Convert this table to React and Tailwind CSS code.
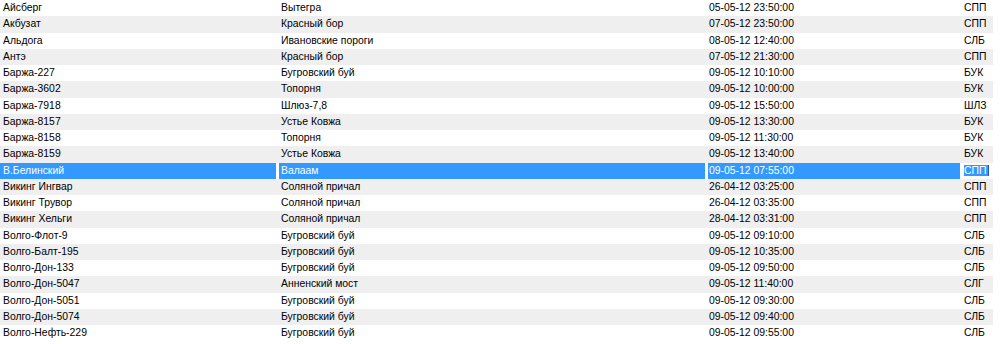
import React from 'react'

const rows = [
  ['Айсберг', 'Вытегра', '05-05-12 23:50:00', 'СПП'],
  ['Акбузат', 'Красный бор', '07-05-12 23:50:00', 'СПП'],
  ['Альдога', 'Ивановские пороги', '08-05-12 12:40:00', 'СЛБ'],
  ['Антэ', 'Красный бор', '07-05-12 21:30:00', 'СПП'],
  ['Баржа-227', 'Бугровский буй', '09-05-12 10:10:00', 'БУК'],
  ['Баржа-3602', 'Топорня', '09-05-12 10:00:00', 'БУК'],
  ['Баржа-7918', 'Шлюз-7,8', '09-05-12 15:50:00', 'ШЛЗ'],
  ['Баржа-8157', 'Устье Ковжа', '09-05-12 13:30:00', 'БУК'],
  ['Баржа-8158', 'Топорня', '09-05-12 11:30:00', 'БУК'],
  ['Баржа-8159', 'Устье Ковжа', '09-05-12 13:40:00', 'БУК'],
  ['В.Белинский', 'Валаам', '09-05-12 07:55:00', 'СПП'],
  ['Викинг Ингвар', 'Соляной причал', '26-04-12 03:25:00', 'СПП'],
  ['Викинг Трувор', 'Соляной причал', '26-04-12 03:35:00', 'СПП'],
  ['Викинг Хельги', 'Соляной причал', '28-04-12 03:31:00', 'СПП'],
  ['Волго-Флот-9', 'Бугровский буй', '09-05-12 09:10:00', 'СЛБ'],
  ['Волго-Балт-195', 'Бугровский буй', '09-05-12 10:35:00', 'СЛБ'],
  ['Волго-Дон-133', 'Бугровский буй', '09-05-12 09:50:00', 'СЛБ'],
  ['Волго-Дон-5047', 'Анненский мост', '09-05-12 11:40:00', 'СЛГ'],
  ['Волго-Дон-5051', 'Бугровский буй', '09-05-12 09:30:00', 'СЛБ'],
  ['Волго-Дон-5074', 'Бугровский буй', '09-05-12 09:40:00', 'СЛБ'],
  ['Волго-Нефть-229', 'Бугровский буй', '09-05-12 09:55:00', 'СЛБ'],
]

const SELECTED = 10

export default function App() {
  return (
    <div className="w-[1000px] h-[344px] overflow-hidden bg-white text-black text-[10.4px] leading-[16.25px] font-['Liberation_Sans',Arial,sans-serif]">
      {rows.map((r, i) => {
        const sel = i === SELECTED
        return (
          <div key={i}
            className={`w-[993px] h-[16.25px] grid grid-cols-[276px_426px_252px_30px] gap-x-[3px] whitespace-nowrap ${i % 2 === 1 ? 'bg-[#efefef]' : 'bg-white'}`}>
            <div className={`pl-[3px] ${sel ? 'bg-[#3399ff] text-white' : ''}`}>{r[0]}</div>
            <div className={`pl-[2px] ${sel ? 'bg-[#3399ff] text-white' : ''}`}>{r[1]}</div>
            <div className={`pl-[1px] ${sel ? 'bg-[#3399ff] text-white' : ''}`}>{r[2]}</div>
            <div className="pl-[1px]">
              {sel
                ? <span className="bg-[#3399ff] text-white pr-[2px] border-r border-[#1f5fa8]">{r[3]}</span>
                : r[3]}
            </div>
          </div>
        )
      })}
    </div>
  )
}
